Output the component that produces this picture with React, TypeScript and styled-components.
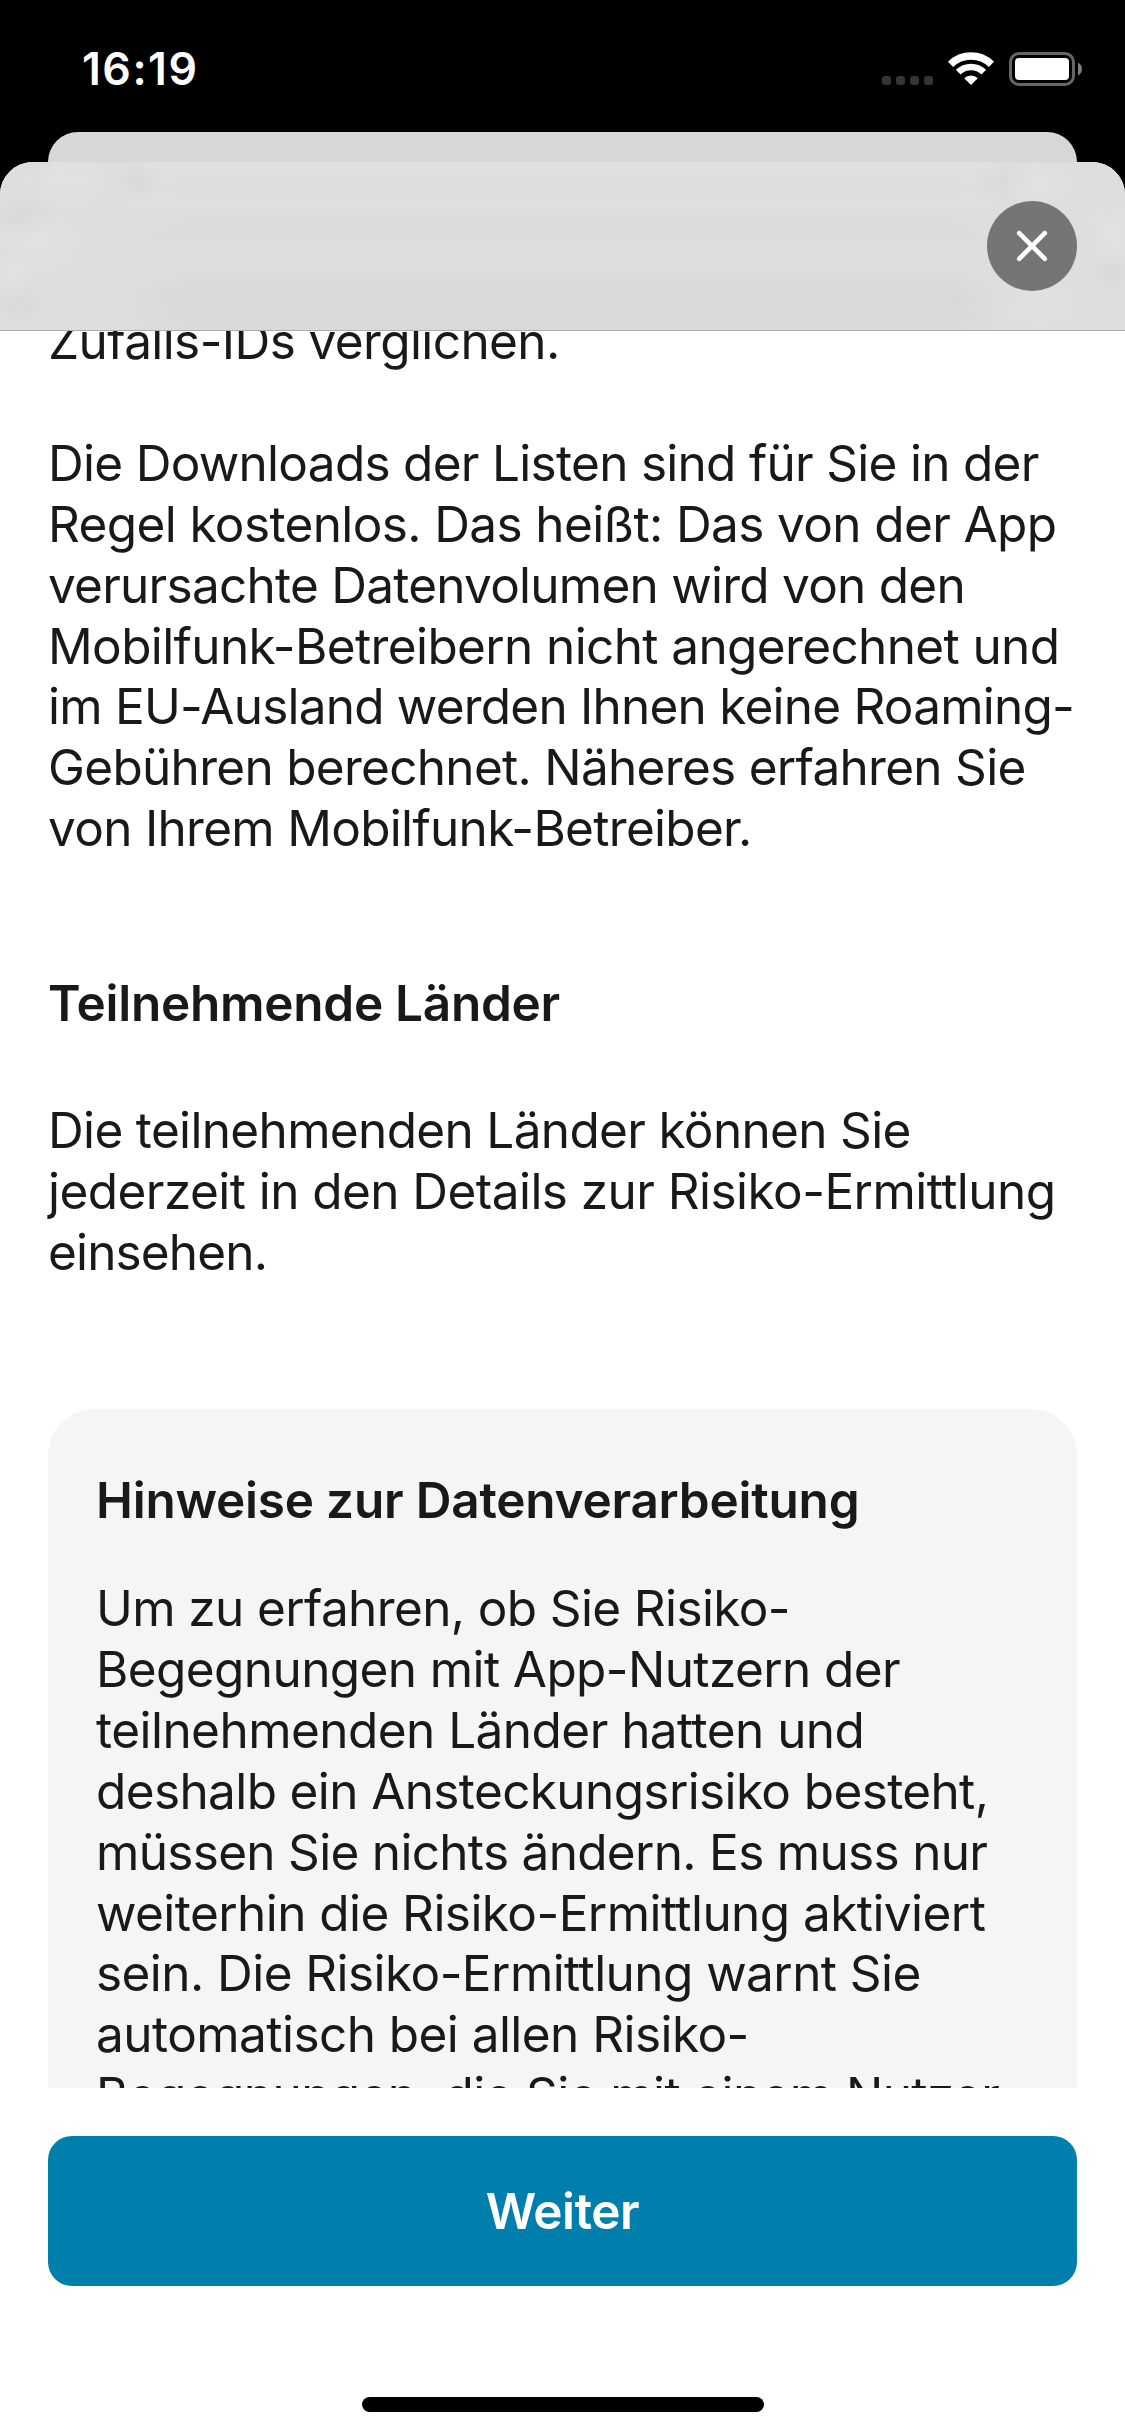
import React from "react";
import styled, { createGlobalStyle } from "styled-components";

const GlobalStyle = createGlobalStyle`
  * { box-sizing: border-box; }
  body { margin: 0; background: #000; }
`;

const Screen = styled.div`
  width: 1125px;
  height: 2436px;
  display: flex;
  flex-direction: column;
  overflow: hidden;
  background: #000;
  color: #17191a;
  font-family: Inter, "Liberation Sans", sans-serif;
  font-size: 49.5px;
  line-height: 60.85px;
`;

const StatusBar = styled.div`
  flex: none;
  height: 132px;
  display: flex;
  justify-content: space-between;
  padding: 0 42px 0 82px;
  color: #fff;
`;

const Clock = styled.div`
  padding-top: 39px;
  font-size: 44.6px;
  font-weight: 600;
  letter-spacing: 1.5px;
`;

const StatusIcons = styled.div`
  display: flex;
  align-items: flex-start;
  padding-top: 52px;
`;

const Dots = styled.div`
  display: flex;
  gap: 5px;
  padding-top: 24px;
  margin-right: 15px;
`;

const Dot = styled.i`
  width: 9px;
  height: 9px;
  border-radius: 3px;
  background: #353535;
`;

const Wifi = styled.svg`
  width: 46px;
  height: 34px;
  margin-right: 15px;
`;

const Battery = styled.svg`
  width: 74px;
  height: 34px;
`;

const BackSheet = styled.div`
  flex: none;
  height: 30px;
  margin: 0 48px;
  border-radius: 30px 30px 0 0;
  background: #d7d7d7;
`;

const Sheet = styled.main`
  flex: 1;
  min-height: 0;
  display: flex;
  flex-direction: column;
  overflow: hidden;
  border-radius: 33px 33px 0 0;
  background: #fff;
`;

const Header = styled.header`
  flex: none;
  height: 169px;
  display: flex;
  justify-content: flex-end;
  align-items: flex-start;
  padding: 39px 48px 0 0;
  border-bottom: 1px solid #adadad;
  background:
    radial-gradient(ellipse 40px 30px at 38px 80px, rgba(227, 227, 227, 0.7), transparent),
    radial-gradient(ellipse 36px 22px at 22px 54px, rgba(215, 215, 215, 0.7), transparent),
    radial-gradient(ellipse 40px 26px at 68px 18px, rgba(228, 228, 228, 0.7), transparent),
    radial-gradient(ellipse 22px 18px at 138px 20px, rgba(214, 214, 214, 0.6), transparent),
    radial-gradient(ellipse 26px 22px at 12px 110px, rgba(228, 228, 228, 0.7), transparent),
    radial-gradient(ellipse 30px 24px at 20px 144px, rgba(216, 216, 216, 0.7), transparent),
    radial-gradient(ellipse 34px 24px at 1036px 24px, rgba(228, 228, 228, 0.7), transparent),
    radial-gradient(ellipse 30px 20px at 1005px 22px, rgba(215, 215, 215, 0.6), transparent),
    radial-gradient(ellipse 24px 30px at 1112px 76px, rgba(228, 228, 228, 0.7), transparent),
    radial-gradient(ellipse 26px 20px at 1112px 110px, rgba(215, 215, 215, 0.7), transparent),
    radial-gradient(ellipse 36px 20px at 1040px 142px, rgba(226, 226, 226, 0.7), transparent),
    linear-gradient(90deg, #dedede 120px, transparent 190px, transparent 950px, #dedede 1010px),
    linear-gradient(#e1e1e1 0, #dddddd 28px, #dfdfdf 34px, #dbdbdb 74px, #dedede 86px, #dedede 104px, #d8d8d8 136px, #dadada 168px);
`;

const CloseButton = styled.button`
  width: 90px;
  height: 90px;
  padding: 0;
  border: 0;
  border-radius: 50%;
  background: #747577;
`;

const CloseIcon = styled.svg`
  display: block;
  width: 90px;
  height: 90px;
`;

const Content = styled.section`
  flex: none;
  height: 1757px;
  overflow: hidden;
  padding: 0 48px;
`;

const Scrolled = styled.div`
  margin-top: -19.6px;
`;

const Paragraph = styled.p<{ $after?: number }>`
  margin: 0 0 ${(p) => p.$after ?? 0}px;
`;

const Title = styled.h2<{ $after: number }>`
  margin: 0 0 ${(p) => p.$after}px;
  font-size: inherit;
  font-weight: 600;
`;

const Line = styled.span<{ $tracking: number }>`
  display: block;
  white-space: nowrap;
  letter-spacing: ${(p) => p.$tracking}px;
`;

const Card = styled.article`
  padding: 60.6px 48px 48px;
  border-radius: 47px;
  background: #f5f5f5;
`;

const Footer = styled.footer`
  flex: 1;
  display: flex;
  flex-direction: column;
  align-items: center;
  justify-content: space-between;
  padding: 48px 48px 24px;
`;

const PrimaryButton = styled.button`
  align-self: stretch;
  height: 150px;
  padding: 0;
  border: 0;
  border-radius: 24px;
  background: #007fad;
  color: #fff;
  font: inherit;
  font-weight: 600;
  letter-spacing: -0.4px;
`;

const HomeIndicator = styled.div`
  width: 402px;
  height: 15px;
  border-radius: 8px;
  background: #000;
`;

type TextLine = [text: string, tracking: number];

const intro: TextLine[] = [["Zufalls-IDs verglichen.", -0.6]];

const downloads: TextLine[] = [
  ["Die Downloads der Listen sind für Sie in der", -0.71],
  ["Regel kostenlos. Das heißt: Das von der App", -0.62],
  ["verursachte Datenvolumen wird von den", -0.75],
  ["Mobilfunk-Betreibern nicht angerechnet und", -0.62],
  ["im EU-Ausland werden Ihnen keine Roaming-", -0.78],
  ["Gebühren berechnet. Näheres erfahren Sie", -0.7],
  ["von Ihrem Mobilfunk-Betreiber.", -0.7],
];

const countries: TextLine[] = [
  ["Die teilnehmenden Länder können Sie", -0.66],
  ["jederzeit in den Details zur Risiko-Ermittlung", -0.55],
  ["einsehen.", -0.85],
];

const privacy: TextLine[] = [
  ["Um zu erfahren, ob Sie Risiko-", -0.62],
  ["Begegnungen mit App-Nutzern der", -0.6],
  ["teilnehmenden Länder hatten und", -0.54],
  ["deshalb ein Ansteckungsrisiko besteht,", -0.62],
  ["müssen Sie nichts ändern. Es muss nur", -0.69],
  ["weiterhin die Risiko-Ermittlung aktiviert", -0.56],
  ["sein. Die Risiko-Ermittlung warnt Sie", -0.56],
  ["automatisch bei allen Risiko-", -0.55],
  ["Begegnungen, die Sie mit einem Nutzer", -0.6],
];

const Lines = ({ lines }: { lines: TextLine[] }) => (
  <>
    {lines.map(([text, tracking]) => (
      <Line key={text} $tracking={tracking}>
        {text}
      </Line>
    ))}
  </>
);

export default function App() {
  return (
    <>
      <GlobalStyle />
      <Screen>
        <StatusBar>
          <Clock>16:19</Clock>
          <StatusIcons>
            <Dots>
              <Dot />
              <Dot />
              <Dot />
              <Dot />
            </Dots>
            <Wifi viewBox="0 0 46 34" fill="none" stroke="#fff">
              <path d="M2.55 12.35A29.3 29.3 0 0 1 43.45 12.35" strokeWidth="7.4" />
              <path d="M10.2 20.2A18.3 18.3 0 0 1 35.8 20.2" strokeWidth="6.6" />
              <path d="M23 33L16.2 26.2A9.7 9.7 0 0 1 29.8 26.2Z" fill="#fff" stroke="none" />
            </Wifi>
            <Battery viewBox="0 0 74 34">
              <rect x="1.5" y="1.5" width="63" height="31" rx="8.5" fill="none" stroke="#666" strokeWidth="3" />
              <rect x="6" y="6" width="54" height="22" rx="4" fill="#fff" />
              <path d="M69 10.7C74.3 12.6 74.3 21.4 69 23.3Z" fill="#808080" />
            </Battery>
          </StatusIcons>
        </StatusBar>
        <BackSheet />
        <Sheet>
          <Header>
            <CloseButton aria-label="Schließen">
              <CloseIcon viewBox="0 0 90 90" stroke="#fff" strokeWidth="4.6" strokeLinecap="round">
                <path d="M32.2 32.2L57.8 57.8M57.8 32.2L32.2 57.8" />
              </CloseIcon>
            </CloseButton>
          </Header>
          <Content>
            <Scrolled>
              <Paragraph $after={60.85}>
                <Lines lines={intro} />
              </Paragraph>
              <Paragraph $after={114.4}>
                <Lines lines={downloads} />
              </Paragraph>
              <Title $after={66}>
                <Line $tracking={-0.27}>Teilnehmende Länder</Line>
              </Title>
              <Paragraph $after={126.2}>
                <Lines lines={countries} />
              </Paragraph>
              <Card>
                <Title $after={48}>
                  <Line $tracking={-0.22}>Hinweise zur Datenverarbeitung</Line>
                </Title>
                <Paragraph>
                  <Lines lines={privacy} />
                </Paragraph>
              </Card>
            </Scrolled>
          </Content>
          <Footer>
            <PrimaryButton>Weiter</PrimaryButton>
            <HomeIndicator />
          </Footer>
        </Sheet>
      </Screen>
    </>
  );
}
